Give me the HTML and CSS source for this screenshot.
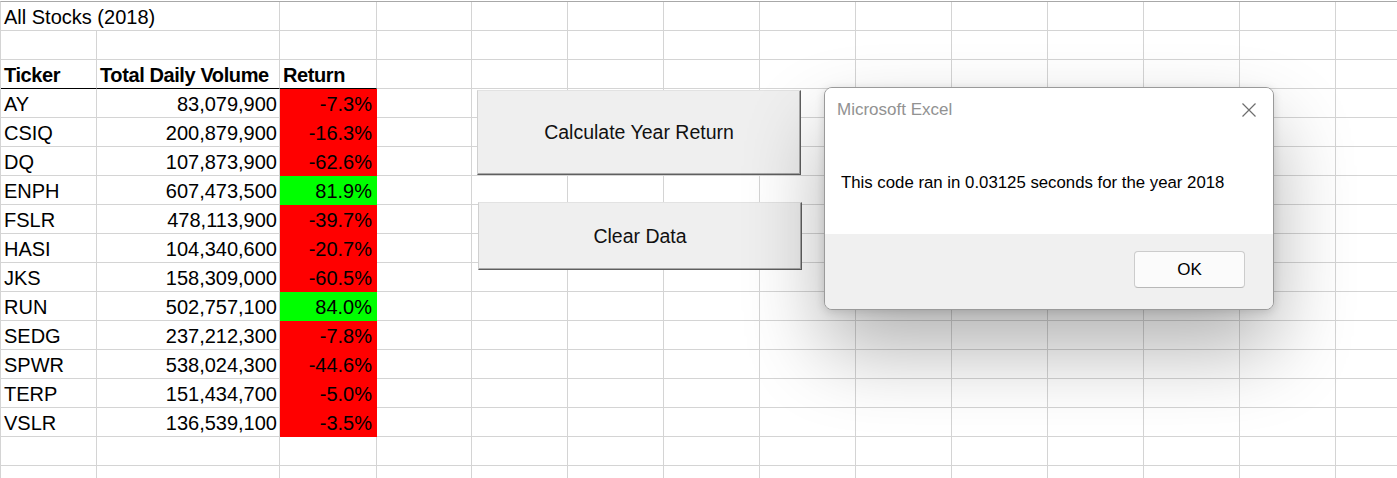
FILE: index.html
```html
<!DOCTYPE html>
<html>
<head>
<meta charset="utf-8">
<link rel="stylesheet" href="styles.css">
</head>
<body>
<div class="stage">
  <div class="sheet">
    <div class="c span2">All Stocks (2018)</div><div class="c"></div><div class="c"></div><div class="c"></div><div class="c"></div><div class="c"></div><div class="c"></div><div class="c"></div><div class="c"></div><div class="c"></div><div class="c"></div><div class="c"></div><div class="c"></div>

    <div class="c"></div><div class="c"></div><div class="c"></div><div class="c"></div><div class="c"></div><div class="c"></div><div class="c"></div><div class="c"></div><div class="c"></div><div class="c"></div><div class="c"></div><div class="c"></div><div class="c"></div><div class="c"></div>

    <div class="c hd">Ticker</div><div class="c hd">Total Daily Volume</div><div class="c hd">Return</div><div class="c"></div><div class="c"></div><div class="c"></div><div class="c"></div><div class="c"></div><div class="c"></div><div class="c"></div><div class="c"></div><div class="c"></div><div class="c"></div><div class="c"></div>

    <div class="c">AY</div><div class="c num">83,079,900</div><div class="c pct neg">-7.3%</div><div class="c"></div><div class="c"></div><div class="c"></div><div class="c"></div><div class="c"></div><div class="c"></div><div class="c"></div><div class="c"></div><div class="c"></div><div class="c"></div><div class="c"></div>

    <div class="c">CSIQ</div><div class="c num">200,879,900</div><div class="c pct neg">-16.3%</div><div class="c"></div><div class="c"></div><div class="c"></div><div class="c"></div><div class="c"></div><div class="c"></div><div class="c"></div><div class="c"></div><div class="c"></div><div class="c"></div><div class="c"></div>

    <div class="c">DQ</div><div class="c num">107,873,900</div><div class="c pct neg">-62.6%</div><div class="c"></div><div class="c"></div><div class="c"></div><div class="c"></div><div class="c"></div><div class="c"></div><div class="c"></div><div class="c"></div><div class="c"></div><div class="c"></div><div class="c"></div>

    <div class="c">ENPH</div><div class="c num">607,473,500</div><div class="c pct pos">81.9%</div><div class="c"></div><div class="c"></div><div class="c"></div><div class="c"></div><div class="c"></div><div class="c"></div><div class="c"></div><div class="c"></div><div class="c"></div><div class="c"></div><div class="c"></div>

    <div class="c">FSLR</div><div class="c num">478,113,900</div><div class="c pct neg">-39.7%</div><div class="c"></div><div class="c"></div><div class="c"></div><div class="c"></div><div class="c"></div><div class="c"></div><div class="c"></div><div class="c"></div><div class="c"></div><div class="c"></div><div class="c"></div>

    <div class="c">HASI</div><div class="c num">104,340,600</div><div class="c pct neg">-20.7%</div><div class="c"></div><div class="c"></div><div class="c"></div><div class="c"></div><div class="c"></div><div class="c"></div><div class="c"></div><div class="c"></div><div class="c"></div><div class="c"></div><div class="c"></div>

    <div class="c">JKS</div><div class="c num">158,309,000</div><div class="c pct neg">-60.5%</div><div class="c"></div><div class="c"></div><div class="c"></div><div class="c"></div><div class="c"></div><div class="c"></div><div class="c"></div><div class="c"></div><div class="c"></div><div class="c"></div><div class="c"></div>

    <div class="c">RUN</div><div class="c num">502,757,100</div><div class="c pct pos">84.0%</div><div class="c"></div><div class="c"></div><div class="c"></div><div class="c"></div><div class="c"></div><div class="c"></div><div class="c"></div><div class="c"></div><div class="c"></div><div class="c"></div><div class="c"></div>

    <div class="c">SEDG</div><div class="c num">237,212,300</div><div class="c pct neg">-7.8%</div><div class="c"></div><div class="c"></div><div class="c"></div><div class="c"></div><div class="c"></div><div class="c"></div><div class="c"></div><div class="c"></div><div class="c"></div><div class="c"></div><div class="c"></div>

    <div class="c">SPWR</div><div class="c num">538,024,300</div><div class="c pct neg">-44.6%</div><div class="c"></div><div class="c"></div><div class="c"></div><div class="c"></div><div class="c"></div><div class="c"></div><div class="c"></div><div class="c"></div><div class="c"></div><div class="c"></div><div class="c"></div>

    <div class="c">TERP</div><div class="c num">151,434,700</div><div class="c pct neg">-5.0%</div><div class="c"></div><div class="c"></div><div class="c"></div><div class="c"></div><div class="c"></div><div class="c"></div><div class="c"></div><div class="c"></div><div class="c"></div><div class="c"></div><div class="c"></div>

    <div class="c">VSLR</div><div class="c num">136,539,100</div><div class="c pct neg">-3.5%</div><div class="c"></div><div class="c"></div><div class="c"></div><div class="c"></div><div class="c"></div><div class="c"></div><div class="c"></div><div class="c"></div><div class="c"></div><div class="c"></div><div class="c"></div>

    <div class="c"></div><div class="c"></div><div class="c"></div><div class="c"></div><div class="c"></div><div class="c"></div><div class="c"></div><div class="c"></div><div class="c"></div><div class="c"></div><div class="c"></div><div class="c"></div><div class="c"></div><div class="c"></div>

    <div class="c"></div><div class="c"></div><div class="c"></div><div class="c"></div><div class="c"></div><div class="c"></div><div class="c"></div><div class="c"></div><div class="c"></div><div class="c"></div><div class="c"></div><div class="c"></div><div class="c"></div><div class="c"></div>
  </div>

  <button class="xl-btn btn-calc">Calculate Year Return</button>
  <button class="xl-btn btn-clear">Clear Data</button>

  <div class="dlg">
    <div class="dlg-main">
      <div class="dlg-head">
        <span class="dlg-title">Microsoft Excel</span>
        <svg class="dlg-x" width="16" height="16" viewBox="0 0 16 16"><path d="M1.5 1.5 L14.5 14.5 M14.5 1.5 L1.5 14.5" stroke="#6e6e6e" stroke-width="1.2" fill="none"/></svg>
      </div>
      <div class="dlg-msg">This code ran in 0.03125 seconds for the year 2018</div>
    </div>
    <div class="dlg-foot">
      <button class="ok">OK</button>
    </div>
  </div>
</div>
</body>
</html>
```

FILE: styles.css
```css
html, body {
  margin: 0;
  padding: 0;
  background: #ffffff;
}
body {
  width: 1397px;
  height: 478px;
  overflow: hidden;
}
.stage {
  position: relative;
  width: 1397px;
  height: 478px;
  padding-top: 1px;
  box-sizing: border-box;
  overflow: hidden;
}
.sheet {
  display: grid;
  grid-template-columns: 96px 183px 97px 95px repeat(10, 96px);
  grid-auto-rows: 29px;
  border-top: 1px solid #a8a8a8;
  border-left: 1px solid #d4d4d4;
  width: max-content;
}
.c {
  box-sizing: border-box;
  height: 29px;
  border-right: 1px solid #d4d4d4;
  border-bottom: 1px solid #d4d4d4;
  padding: 0 3px;
  font-family: "Liberation Sans", Arial, sans-serif;
  font-size: 20px;
  line-height: 30px;
  color: #000;
  white-space: nowrap;
  overflow: visible;
}
.span2 {
  grid-column: span 2;
}
.hd {
  font-weight: bold;
  letter-spacing: -0.4px;
  border-bottom-color: #000;
}
.num {
  text-align: right;
  padding-right: 2px;
}
.pct {
  text-align: right;
  padding-right: 4px;
}
.neg {
  background: #ff0000;
  border-right-color: #ff0000;
  border-bottom-color: #ff0000;
}
.pos {
  background: #00ff00;
  border-right-color: #00ff00;
  border-bottom-color: #00ff00;
}

.xl-btn {
  position: absolute;
  box-sizing: border-box;
  background: #efefef;
  border: 1px solid;
  border-color: #e2e2e2 #5f5f5f #5f5f5f #d0d0d0;
  box-shadow: inset -1px -1px 0 #a9a9a9;
  font-family: "Liberation Sans", Arial, sans-serif;
  font-size: 19.5px;
  color: #111;
  padding: 0;
  margin: 0;
}
.btn-calc {
  left: 477px;
  top: 90px;
  width: 324px;
  height: 85px;
}
.btn-clear {
  left: 478px;
  top: 202px;
  width: 324px;
  height: 68px;
}

.dlg {
  position: absolute;
  left: 824px;
  top: 87px;
  width: 450px;
  height: 223px;
  box-sizing: border-box;
  border: 1px solid #9a9a9a;
  border-radius: 8px;
  background: #f0f0f0;
  overflow: hidden;
  display: flex;
  flex-direction: column;
  box-shadow: 0 40px 80px rgba(0, 0, 0, 0.3), 0 2px 10px rgba(0, 0, 0, 0.14);
  font-family: "Liberation Sans", Arial, sans-serif;
}
.dlg-main {
  background: #ffffff;
  height: 146px;
  display: flex;
  flex-direction: column;
}
.dlg-head {
  height: 44px;
  display: flex;
  align-items: center;
  justify-content: space-between;
  padding: 0 16px 0 12px;
}
.dlg-title {
  font-size: 17px;
  color: #929292;
}
.dlg-x {
  display: block;
}
.dlg-msg {
  margin-top: 39px;
  padding-left: 16px;
  font-size: 16.8px;
  line-height: 24px;
  color: #000;
  white-space: nowrap;
}
.dlg-foot {
  flex: 1;
  display: flex;
  justify-content: flex-end;
  align-items: flex-start;
  padding: 17px 28px 0 0;
  background: #f0f0f0;
}
.ok {
  box-sizing: border-box;
  width: 111px;
  height: 37px;
  background: #fbfbfb;
  border: 1px solid #cccccc;
  border-bottom-color: #b8b8b8;
  border-radius: 4px;
  font-family: "Liberation Sans", Arial, sans-serif;
  font-size: 17px;
  color: #000;
  padding: 0;
  margin: 0;
}
```
